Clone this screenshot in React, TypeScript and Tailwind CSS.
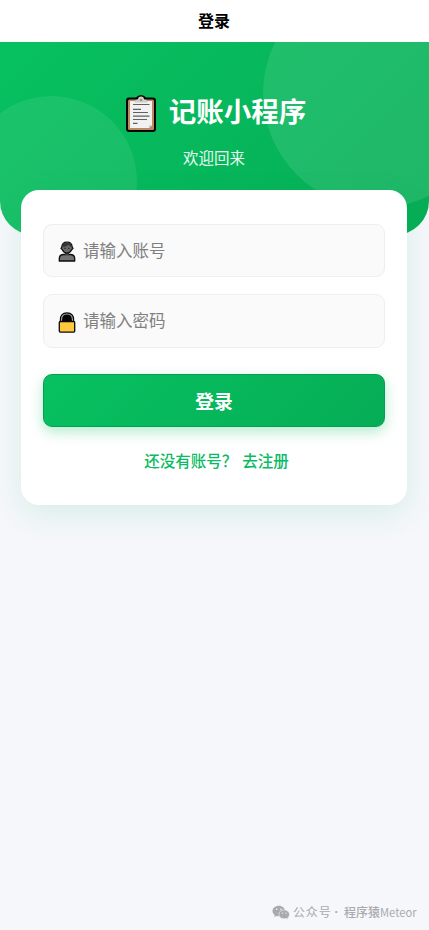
import React from 'react';

interface FieldProps {
  icon: React.ReactNode;
  type: string;
  placeholder: string;
  className: string;
}

const ClipboardIcon: React.FC = () => (
  <svg className="mt-[7px] h-[38px] w-[32px] shrink-0" viewBox="0 0 32 38">
    <path d="M4 2.500h7Q13 0 16 0t5 2.500h7q3 0 3 3V34q0 3-3 3H4q-3 0-3-3V5.500q0-3 3-3z" fill="#050505" />
    <rect x="3" y="4.500" width="26" height="30.500" rx="1.500" fill="#b98b63" />
    <path d="M5 6h22v24.500L24 33H5z" fill="#f1f1f1" />
    <path d="M24 33v-2.500h3z" fill="#c9c5c1" />
    <path d="M9.500 7.500q0-3 3.500-3Q13 1.500 16 1.500t3 3q3.500 0 3.500 3z" fill="#cfcfcf" />
    <circle cx="16" cy="5" r="1.300" fill="#b98b63" />
    <path d="M8 9.500h16.500M8 14.300h8M8 17.500h15M8 21.200h16.500M8 24.500h14M8 28.300h4.500" stroke="#606060" strokeWidth="1.200" />
  </svg>
);

const UserIcon: React.FC = () => (
  <svg className="mt-[2px] h-[21px] w-[18px] shrink-0" viewBox="0 0 18 21">
    <path d="M1.300 20v-2.200q0-4.300 4.200-4.300h7q4.200 0 4.200 4.300V20z" fill="#737373" stroke="#0b0b0b" strokeWidth="1.300" strokeLinejoin="round" />
    <path d="M7 11h4v2.500q-2 1.200-4 0z" fill="#4b4b4b" />
    <path d="M3.800 6Q4 1 9 1t5.200 5l.8 1.300-1.400 1.500Q12 12.200 9 12.200T4.400 8.800L3 7.300z" fill="#686868" stroke="#0b0b0b" strokeWidth="1.200" />
    <path d="M4.400 6Q4.400 1.600 9 1.600T13.600 6Q11.600 5.500 10.500 3.800 8 6.300 4.400 6z" fill="#353535" />
    <path d="M6.500 7.300h1M10.300 7.300h1" stroke="#151515" strokeWidth="1.200" />
  </svg>
);

const LockIcon: React.FC = () => (
  <svg className="mt-[2px] h-[21px] w-[18px] shrink-0" viewBox="0 0 18 21">
    <path d="M1.800 11V8Q1.800.3 9 .3T16.200 8v3z" fill="#050505" />
    <path d="M3.500 9.500V8Q3.500 2 9 2t5.500 6v1.500" fill="none" stroke="#a4a4a4" strokeWidth="1.200" />
    <rect x="1.300" y="9.500" width="15.400" height="10.600" rx="1" fill="#ffc83d" stroke="#080808" strokeWidth="1.300" />
  </svg>
);

const WechatIcon: React.FC = () => (
  <svg className="mr-[3px] h-[15px] w-[18px]" viewBox="0 0 18 15" fill="#a9aaad">
    <path d="M6.800.8c-3.500 0-6.300 2.300-6.300 5.200 0 1.700.9 3.100 2.300 4.100l-.6 1.900 2.200-1.100c.8.200 1.600.3 2.400.3C10.300 11.200 13 8.900 13 6S10.300.8 6.800.8z" />
    <path d="M12.200 4.900c-3 0-5.300 2-5.300 4.500s2.300 4.400 5.300 4.400c.7 0 1.400-.1 2-.3l1.900 1-.5-1.600c1.200-.8 1.900-2.100 1.900-3.500 0-2.500-2.300-4.500-5.300-4.500z" stroke="#f5f7fb" strokeWidth=".6" />
    <g fill="#f5f7fb">
      <circle cx="4.700" cy="4.300" r=".8" />
      <circle cx="8.900" cy="4.300" r=".8" />
      <circle cx="10.500" cy="8.100" r=".7" />
      <circle cx="14" cy="8.100" r=".7" />
    </g>
  </svg>
);

const Field: React.FC<FieldProps> = ({ icon, type, placeholder, className }) => (
  <label className={`flex items-center rounded-[9px] border border-[#eee] bg-[#fafafa] pl-[14px] ${className}`}>
    {icon}
    <input
      type={type}
      placeholder={placeholder}
      className="mb-[2px] ml-[7px] min-w-0 flex-1 bg-transparent text-[16.5px] leading-6 outline-none placeholder:text-[#808080]"
    />
  </label>
);

const App: React.FC = () => {
  return (
    <div className="flex h-[930px] w-[429px] flex-col overflow-hidden bg-[#f5f7fb] font-['Noto_Sans_CJK_SC',sans-serif]">
      <nav className="flex h-[42px] shrink-0 items-center justify-center bg-white pb-[2px] pr-px text-base font-bold text-black">
        登录
      </nav>

      <header className="relative h-[193px] shrink-0 overflow-hidden rounded-b-[34px] bg-[linear-gradient(135deg,#07c160_0%,#06ad56_100%)] text-white">
        <div className="absolute -right-[63px] -top-[63px] h-[229px] w-[229px] rounded-full bg-white/10"></div>
        <div className="absolute -left-[34px] top-[54px] h-[171px] w-[171px] rounded-full bg-white/8"></div>
        <div className="relative flex flex-col items-center pt-[48px]">
          <h1 className="flex h-10 items-center gap-3 pl-[2px] text-[27.5px] font-bold leading-10">
            <ClipboardIcon />
            记账小程序
          </h1>
          <p className="mt-[15px] pr-px text-[15.5px] leading-6 text-white/90">欢迎回来</p>
        </div>
      </header>

      <main className="relative ml-[21px] -mt-[45px] flex h-[315px] w-[386px] shrink-0 flex-col rounded-[18px] bg-white px-[22px] pt-[34px] shadow-[0_9px_30px_rgba(7,173,86,0.12)]">
        <Field icon={<UserIcon />} type="text" placeholder="请输入账号" className="h-[53px]" />
        <Field icon={<LockIcon />} type="password" placeholder="请输入密码" className="mt-[17px] h-[54px]" />
        <button className="mt-[26px] h-[53px] rounded-[9px] border border-[#069f50] bg-[linear-gradient(135deg,#07c160_0%,#06ad56_100%)] pt-[2px] text-[18.8px] font-bold text-white shadow-[0_5px_14px_rgba(7,193,96,0.3)]">
          登录
        </button>
        <div className="mt-[21px] flex justify-center gap-[5px] pl-[5px] text-[15.5px] font-medium leading-6 text-[#0bbb64]">
          <span>还没有账号？</span>
          <a href="#">去注册</a>
        </div>
      </main>

      <footer className="mt-auto flex h-[35px] items-center justify-end pb-px pr-[12.5px] text-xs text-[#a9aaad]">
        <WechatIcon />
        <span className="tracking-[0.9px]">公众号</span>
        <span className="ml-[3px] mr-[6px] font-['Noto_Sans',sans-serif] font-bold">·</span>
        <span className="font-medium">程序猿</span>
        <span className="text-[11.2px]">Meteor</span>
      </footer>
    </div>
  );
};

export default App;
